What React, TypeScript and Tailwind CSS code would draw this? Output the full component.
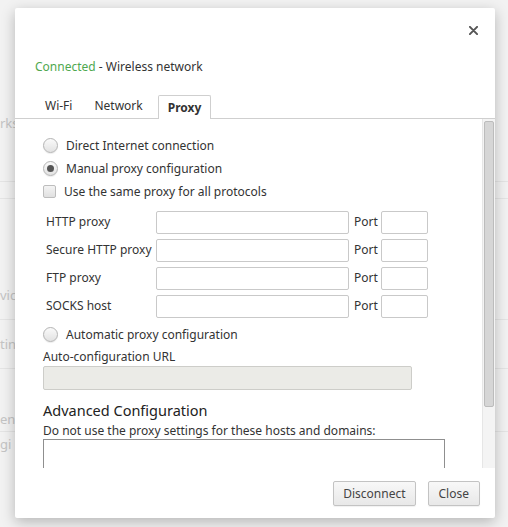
import React from "react";

const font = { fontFamily: '"Noto Sans", "Open Sans", sans-serif' };

const Radio = ({ checked }: { checked?: boolean }) => (
  <span className="flex h-[15px] w-[15px] shrink-0 items-center justify-center rounded-full border border-[#b4b4b4] bg-gradient-to-b from-[#fafafa] to-[#e2e2e2] shadow-[0_1px_1px_rgba(0,0,0,0.08)]">
    {checked && <span className="h-[7px] w-[7px] rounded-full bg-[#555]" />}
  </span>
);

const Field = ({ label }: { label: string }) => (
  <div className="flex h-[28px] items-center">
    <span className="w-[113px] whitespace-nowrap pl-[3px] text-[12px] text-[#333]">{label}</span>
    <div className="h-[23px] w-[193px] rounded-[2px] border border-[#c9c9c9] bg-white" />
    <span className="ml-[5px] w-[27px] text-[12px] text-[#333]">Port</span>
    <div className="h-[23px] w-[47px] rounded-[2px] border border-[#c9c9c9] bg-white" />
  </div>
);

export default function App() {
  return (
    <div className="relative h-[527px] w-[508px] overflow-hidden bg-[#f2f2f2]" style={font}>
      {/* settings page behind the dialog */}
      <div className="flex flex-col text-[13px] text-[#c4c4c4]">
        <div className="mt-[113px] h-[20px] pl-0 leading-[20px]">rks</div>
        <div className="mt-[48px] h-px bg-[#e4e4e4]" />
        <div className="mt-[16px] h-px bg-[#e4e4e4]" />
        <div className="mt-[86px] h-[20px] leading-[20px]">vic</div>
        <div className="mt-[14px] h-px bg-[#e4e4e4]" />
        <div className="mt-[14px] h-[20px] leading-[20px]">tin</div>
        <div className="mt-[14px] h-px bg-[#e4e4e4]" />
        <div className="mt-[40px] h-[20px] leading-[20px]">en</div>
        <div className="mt-[2px] h-px bg-[#e4e4e4]" />
        <div className="mt-[2px] h-[20px] leading-[20px]">gi</div>
      </div>

      {/* modal dialog */}
      <div className="absolute left-[15px] top-[8px] flex h-[510px] w-[480px] flex-col rounded-[2px] bg-white shadow-[0_4px_14px_rgba(0,0,0,0.25)]">
        <div className="flex h-[44px] justify-end pr-[17px] pt-[14px]">
          <svg width="9" height="9" viewBox="0 0 10 10" className="mt-[4px]">
            <path d="M1 1L9 9M9 1L1 9" stroke="#555" strokeWidth="2.2" strokeLinecap="round" />
          </svg>
        </div>
        <div className="pl-[20px] pt-[5px] text-[12px] leading-[20px] text-[#333]">
          <span className="text-[#4fa84f]">Connected</span> - Wireless network
        </div>

        <div className="mt-[17px] flex h-[24px] items-end pl-[20px] text-[12px] text-[#333]">
          <div className="pb-[3px] pl-[10px] pr-[11px]">Wi-Fi</div>
          <div className="pb-[3px] pl-[11px] pr-[15px]">Network</div>
          <div className="relative top-px flex h-[24px] items-center rounded-t-[2px] border border-b-0 border-[#cfcfcf] bg-white px-[9px] font-bold">
            Proxy
          </div>
        </div>

        {/* tab panel */}
        <div className="flex h-[350px] border-t border-[#cfcfcf]">
          <div className="flex-1 overflow-hidden pl-[28px] pt-[15px] text-[12px] text-[#333]">
            <div className="flex h-[23px] items-center gap-[8px]">
              <Radio />
              <span>Direct Internet connection</span>
            </div>
            <div className="flex h-[23px] items-center gap-[8px]">
              <Radio checked />
              <span>Manual proxy configuration</span>
            </div>
            <div className="flex h-[23px] items-center gap-[8px]">
              <span className="h-[13px] w-[13px] rounded-[2px] border border-[#bdbdbd] bg-gradient-to-b from-[#f4f4f4] to-[#e0e0e0]" />
              <span>Use the same proxy for all protocols</span>
            </div>
            <div className="mt-[5px] flex flex-col">
              <Field label="HTTP proxy" />
              <Field label="Secure HTTP proxy" />
              <Field label="FTP proxy" />
              <Field label="SOCKS host" />
            </div>
            <div className="flex h-[29px] items-center gap-[8px]">
              <Radio />
              <span>Automatic proxy configuration</span>
            </div>
            <div className="leading-[16px]">Auto-configuration URL</div>
            <div className="mt-[1px] h-[24px] w-[369px] rounded-[2px] border border-[#cdcdc9] bg-[#ebebe7]" />
            <div className="mt-[10px] text-[14.5px] leading-[20px] text-[#222]">Advanced Configuration</div>
            <div className="mt-[2px] leading-[17px]">Do not use the proxy settings for these hosts and domains:</div>
            <div className="h-[40px] w-[402px] border border-b-0 border-[#8f8f8f]" />
          </div>
          <div className="w-[13px] border-l border-[#e6e6e6] bg-[#f4f4f4] px-[1px] pt-[2px]">
            <div className="h-[286px] rounded-[2px] border border-[#bcbcbc] bg-[#d6d6d6]" />
          </div>
        </div>

        <div className="flex justify-end gap-[12px] pr-[15px] pt-[13px]">
          <button className="h-[25px] rounded-[2px] border border-[#c3c3c3] bg-gradient-to-b from-[#f8f8f8] to-[#e8e8e8] px-[9px] text-[12px] text-[#444] shadow-[0_1px_1px_rgba(0,0,0,0.06)]">
            Disconnect
          </button>
          <button className="h-[25px] rounded-[2px] border border-[#c3c3c3] bg-gradient-to-b from-[#f8f8f8] to-[#e8e8e8] px-[10px] text-[12px] text-[#444] shadow-[0_1px_1px_rgba(0,0,0,0.06)]">
            Close
          </button>
        </div>
      </div>
    </div>
  );
}
